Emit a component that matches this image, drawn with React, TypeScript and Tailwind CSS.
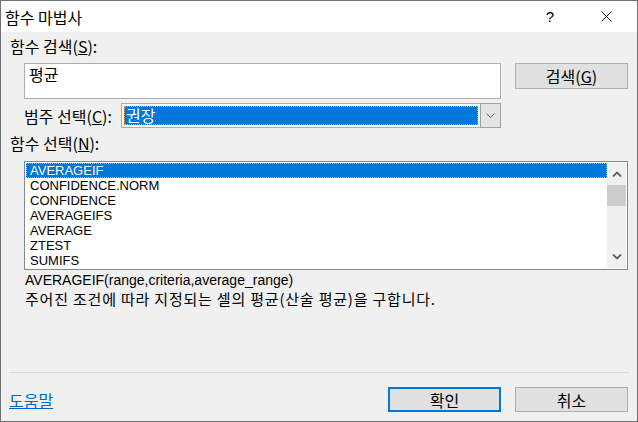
import React from 'react'

const items = ['AVERAGEIF', 'CONFIDENCE.NORM', 'CONFIDENCE', 'AVERAGEIFS', 'AVERAGE', 'ZTEST', 'SUMIFS']

const kr = "font-['Noto_Sans_CJK_KR',sans-serif]"

function Chevron({ up }: { up?: boolean }) {
  return (
    <svg width="10" height="6" viewBox="0 0 10 6" className="block">
      <path
        d={up ? 'M1 5.5 L5 1.5 L9 5.5' : 'M1 0.5 L5 4.5 L9 0.5'}
        fill="none"
        stroke="#606060"
        strokeWidth="1.8"
      />
    </svg>
  )
}

export default function App() {
  return (
    <div className={`w-[638px] h-[422px] border border-[#707070] bg-[#f0f0f0] flex flex-col text-black ${kr}`}>
      {/* 타이틀 바 */}
      <div className="h-[31px] bg-white flex items-center pl-[4px] shrink-0">
        <span className="text-[16px] leading-none">함수 마법사</span>
        <span className="ml-auto mr-[47px] text-[15px] leading-none font-['Liberation_Sans',sans-serif]">?</span>
        <svg width="11" height="11" viewBox="0 0 11 11" className="mr-[25px]">
          <path d="M0.5 0.5 L10.5 10.5 M10.5 0.5 L0.5 10.5" stroke="#111" strokeWidth="1" />
        </svg>
      </div>

      <div className="flex-1 flex flex-col pl-[9px] pr-[9px]">
        <div className="mt-[6px] text-[16px] leading-[16px]">
          함수 검색(<span className="underline">S</span>):
        </div>

        {/* 검색 */}
        <div className="mt-[9px] ml-[14px] flex items-start gap-[14px]">
          <div className="w-[477px] h-[36px] bg-white border border-[#adadad] px-[4px] pt-[1px] text-[16px] leading-[18px]">
            평균
          </div>
          <button className="w-[113px] h-[26px] bg-[#e1e1e1] border border-[#adadad] text-[16px] leading-none flex items-center justify-center">
            검색(<span className="underline">G</span>)
          </button>
        </div>

        {/* 범주 */}
        <div className="mt-[4px] ml-[14px] flex items-center">
          <div className="w-[97px] text-[16px] leading-[16px]">
            범주 선택(<span className="underline">C</span>):
          </div>
          <div className="w-[380px] h-[25px] bg-white border border-[#adadad] flex">
            <div className="flex-1 p-[2px]">
              <div className="h-full bg-[#0078d7] outline outline-1 outline-dotted outline-[#f3a04a] -outline-offset-1 text-white text-[16px] leading-[18px] pl-[2px]">
                권장
              </div>
            </div>
            <div className="w-[21px] -my-px -mr-px bg-[#e5e5e5] border border-[#a0a0a0] flex items-center justify-center">
              <svg width="9" height="5" viewBox="0 0 9 5">
                <path d="M0.5 0.5 L4.5 4.5 L8.5 0.5" fill="none" stroke="#606060" strokeWidth="1" />
              </svg>
            </div>
          </div>
        </div>

        <div className="mt-[7px] text-[16px] leading-[16px]">
          함수 선택(<span className="underline">N</span>):
        </div>

        {/* 함수 목록 */}
        <div className="mt-[10px] ml-[14px] w-[604px] h-[109px] bg-white border border-[#828790] flex">
          <div className="flex-1 pt-[1px] pl-[1px] font-['Liberation_Sans',sans-serif] text-[13px]">
            {items.map((it, i) => (
              <div
                key={it}
                className={
                  i === 0
                    ? 'h-[15px] leading-[15px] pl-[4px] bg-[#0078d7] text-white outline outline-1 outline-dotted outline-[#f3a04a] -outline-offset-1'
                    : 'h-[15px] leading-[15px] pl-[4px]'
                }
              >
                {it}
              </div>
            ))}
          </div>
          <div className="w-[19px] my-px mr-px bg-[#f0f0f0] flex flex-col items-center">
            <div className="h-[22px] flex items-center justify-center">
              <Chevron up />
            </div>
            <div className="w-full h-[21px] bg-[#cdcdcd]" />
            <div className="flex-1" />
            <div className="h-[22px] flex items-center justify-center">
              <Chevron />
            </div>
          </div>
        </div>

        {/* 설명 */}
        <div className="mt-[2px] ml-[15px]">
          <div className="font-['Liberation_Sans',sans-serif] text-[14px] leading-[16px]">
            AVERAGEIF(range,criteria,average_range)
          </div>
          <div className="mt-[1px] text-[15px] leading-[20px] tracking-[0.8px]">
            주어진 조건에 따라 지정되는 셀의 평균(산술 평균)을 구합니다.
          </div>
        </div>

        <div className="flex-1" />

        <div className="h-px bg-[#dadada] -mx-px" />

        {/* 하단 */}
        <div className="mt-[14px] mb-[9px] flex items-center">
          <a href="#" className="-ml-px text-[16px] leading-none text-[#0066cc] underline">도움말</a>
          <div className="ml-auto flex gap-[14px]">
            <button className="w-[113px] h-[25px] bg-[#e1e1e1] border-2 border-[#0078d7] text-[16px] leading-none flex items-center justify-center">
              확인
            </button>
            <button className="w-[113px] h-[25px] bg-[#e1e1e1] border border-[#adadad] text-[16px] leading-none flex items-center justify-center">
              취소
            </button>
          </div>
        </div>
      </div>
    </div>
  )
}
